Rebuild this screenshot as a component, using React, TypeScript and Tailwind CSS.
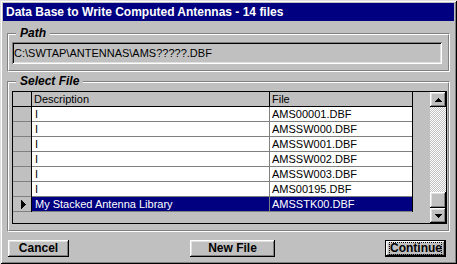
import React from "react";

const FONT = "font-['Liberation_Sans',Arial,sans-serif]";
const RAISED =
  "shadow-[inset_-1px_-1px_0_#000,inset_1px_1px_0_#fff,inset_-2px_-2px_0_#808080,inset_2px_2px_0_#dfdfdf]";

const rows = [
  { d: "I", f: "AMS00001.DBF" },
  { d: "I", f: "AMSSW000.DBF" },
  { d: "I", f: "AMSSW001.DBF" },
  { d: "I", f: "AMSSW002.DBF" },
  { d: "I", f: "AMSSW003.DBF" },
  { d: "I", f: "AMS00195.DBF" },
  { d: "My Stacked Antenna Library", f: "AMSSTK00.DBF", sel: true },
];

function Arrow({ up }: { up: boolean }) {
  const r = up
    ? [
        [3, 0, 1],
        [2, 1, 3],
        [1, 2, 5],
        [0, 3, 7],
      ]
    : [
        [0, 0, 7],
        [1, 1, 5],
        [2, 2, 3],
        [3, 3, 1],
      ];
  return (
    <svg width="7" height="4" viewBox="0 0 7 4" shapeRendering="crispEdges">
      {r.map(([x, y, w], i) => (
        <rect key={i} x={x} y={y} width={w} height={1} fill="#000" />
      ))}
    </svg>
  );
}

function RowPointer() {
  return (
    <svg width="5" height="9" viewBox="0 0 5 9" shapeRendering="crispEdges">
      {[0, 1, 2, 3, 4].map((i) => (
        <rect key={i} x={i} y={i} width={1} height={9 - 2 * i} fill="#000" />
      ))}
    </svg>
  );
}

function Frame({
  label,
  children,
  pad,
}: {
  label: string;
  children: React.ReactNode;
  pad: string;
}) {
  return (
    <div className="relative border border-t-[#808080] border-l-[#808080] border-b-white border-r-white">
      <div className={`border border-t-white border-l-white border-b-[#808080] border-r-[#808080] ${pad}`}>
        {children}
      </div>
      <span className="absolute top-[-8px] left-[8px] px-[4px] bg-[#c0c0c0] font-bold italic text-[12px] leading-[14px] text-black">
        {label}
      </span>
    </div>
  );
}

export default function App() {
  return (
    <div
      className={`${FONT} w-[457px] h-[264px] bg-[#c0c0c0] p-[3px] flex flex-col text-black shadow-[inset_1px_1px_0_#dfdfdf,inset_-1px_-1px_0_#000,inset_2px_2px_0_#fff,inset_-2px_-2px_0_#808080]`}
    >
      <div className="h-[18px] bg-[#000080] text-white font-bold text-[12px] leading-[18px] pl-[3px] whitespace-nowrap">
        Data Base to Write Computed Antennas - 14 files
      </div>

      <div className="px-[4px] mt-[12px]">
        <Frame label="Path" pad="pt-[7px] pb-[6px] pl-[3px]">
          <div className="w-[430px] h-[22px] pl-[2px] text-[11px] leading-[22px] shadow-[inset_1px_1px_0_#808080,inset_-1px_-1px_0_#fff,inset_2px_2px_0_#000,inset_-2px_-2px_0_#dfdfdf]">
            C:\SWTAP\ANTENNAS\AMS?????.DBF
          </div>
        </Frame>
      </div>

      <div className="px-[4px] mt-[9px]">
        <Frame label="Select File" pad="pt-[8px] pb-[6px] pl-[3px] pr-[1px]">
          <div className="w-[435px] h-[133px] border border-black flex bg-[#c0c0c0] text-[11px]">
            <div className="w-[417px] flex flex-col">
              <div className="flex h-[15px] leading-[14px]">
                <div className="w-[18px] border-b border-black" />
                <div className="w-px bg-black" />
                <div className="w-[237px] border-b border-black pl-[2px]">Description</div>
                <div className="w-px bg-black" />
                <div className="w-[142px] border-b border-black pl-[2px]">File</div>
                <div className="w-px bg-black" />
              </div>
              {rows.map((r, i) => (
                <div key={i} className="flex h-[15px] leading-[14px]">
                  <div className="w-[18px] border-b border-[#808080] flex items-center justify-center pl-[2px]">
                    {r.sel ? <RowPointer /> : null}
                  </div>
                  <div className="w-px bg-black" />
                  <div
                    className={`w-[237px] border-b border-[#808080] pl-[3px] whitespace-nowrap ${
                      r.sel ? "bg-[#000080] text-white" : "bg-white"
                    }`}
                  >
                    {r.d}
                  </div>
                  <div className="w-px bg-[#808080]" />
                  <div
                    className={`w-[142px] border-b border-[#808080] pl-[2px] ${
                      r.sel ? "bg-[#000080] text-white" : "bg-white"
                    }`}
                  >
                    {r.f}
                  </div>
                  <div className="w-px bg-black" />
                </div>
              ))}
            </div>
            <div className="w-[16px] flex flex-col">
              <div className={`h-[15px] flex items-center justify-center ${RAISED}`}>
                <Arrow up />
              </div>
              <div className="h-[85px] bg-[repeating-conic-gradient(#fff_0%_25%,#c0c0c0_0%_50%)] bg-[length:2px_2px]" />
              <div className={`h-[16px] ${RAISED}`} />
              <div className={`h-[15px] flex items-center justify-center ${RAISED}`}>
                <Arrow up={false} />
              </div>
            </div>
          </div>
        </Frame>
      </div>

      <div className="mt-[8px] pl-[5px] flex font-bold text-[12px] leading-[17px]">
        <div className={`w-[61px] h-[17px] text-center ${RAISED}`}>Cancel</div>
        <div className={`ml-[121px] w-[85px] h-[17px] text-center ${RAISED}`}>New File</div>
        <div className="ml-[110px] w-[61px] h-[17px] border border-black">
          <div className={`w-full h-full flex items-center justify-center pb-[1px] ${RAISED}`}>
            <span className="border border-dotted border-black leading-[11px] w-[53px] text-center">Continue</span>
          </div>
        </div>
      </div>
    </div>
  );
}
